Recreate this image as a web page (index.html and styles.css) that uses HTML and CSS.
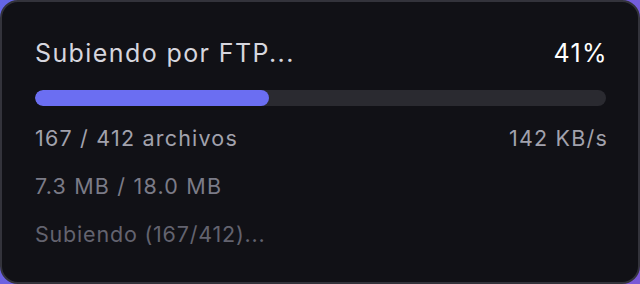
FILE: index.html
```html
<!DOCTYPE html>
<html>
  <head>
    <link rel="stylesheet" href="styles.css">
  </head>
  <body>
    <div class="card">
      <div class="head">
        <span class="title">Subiendo por FTP...</span>
        <span class="percent">41%</span>
      </div>
      <div class="track">
        <div class="fill" style="width: 41%"></div>
      </div>
      <div class="row">
        <span>167 / 412 archivos</span>
        <span class="speed">142 KB/s</span>
      </div>
      <div class="row size">7.3 MB / 18.0 MB</div>
      <div class="row status">Subiendo (167/412)...</div>
    </div>
  </body>
</html>
```

FILE: styles.css
```css
html, body {
  margin: 0;
  height: 100%;
}
body {
  background: linear-gradient(135deg, #6466e6, #7a58d6);
  font-family: Inter, "Noto Sans", sans-serif;
}
.card {
  box-sizing: border-box;
  height: 100%;
  background: #111116;
  border: 2px solid #33333b;
  border-radius: 18px;
  padding: 36px 32px 0 33px;
}
.head {
  display: flex;
  justify-content: space-between;
  font-size: 25px;
  line-height: 30px;
  letter-spacing: 1.4px;
}
.title {
  color: #d6d6de;
}
.percent {
  color: #ffffff;
  margin-right: -2px;
}
.track {
  margin-top: 22px;
  height: 16px;
  border-radius: 8px;
  background: #2a2a30;
  overflow: hidden;
}
.fill {
  height: 100%;
  border-radius: 8px;
  background: #6b6ef2;
}
.row {
  display: flex;
  justify-content: space-between;
  margin-top: 18px;
  font-size: 21.5px;
  line-height: 28px;
  letter-spacing: 1.2px;
  color: #a2a2ad;
}
.speed {
  margin-right: -2px;
}
.size {
  margin-top: 20px;
  color: #7b7b87;
}
.status {
  margin-top: 20px;
  letter-spacing: 0.8px;
  color: #63636f;
}
```
